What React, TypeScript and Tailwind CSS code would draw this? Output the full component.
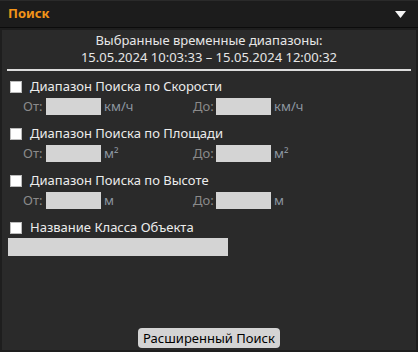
import React from "react";

const font = { fontFamily: "'Noto Sans', 'DejaVu Sans', sans-serif" };

const Check = ({ label }: { label: string }) => (
  <label className="flex items-center h-[20px] pl-[8px] gap-[8px] text-[13px] text-[#ececec]">
    <span className="w-[12px] h-[12px] bg-white border border-[#bbb] shrink-0" />
    <span>{label}</span>
  </label>
);

const RangeRow = ({ unit }: { unit: string }) => (
  <div className="flex items-center h-[19px] pl-[21px] text-[13px]">
    <span className="text-[#8a8a8a] w-[23px]">От:</span>
    <div className="w-[55px] h-[17px] bg-[#d4d4d4]" />
    <span className="text-[#8c96a0] ml-[3px] w-[89px]">{unit}</span>
    <span className="text-[#8a8a8a] w-[23px]">До:</span>
    <div className="w-[55px] h-[17px] bg-[#d4d4d4]" />
    <span className="text-[#8c96a0] ml-[3px]">{unit}</span>
  </div>
);

export default function App() {
  return (
    <div className="w-[418px] h-[352px] bg-[#1e1e1e] flex flex-col" style={font}>
      <div className="h-[28px] border-t border-[#2a2a2a] border-b border-b-[#0c0c0c] bg-[#1c1c1c] flex items-center justify-between pl-[8px] pr-[12px]">
        <span className="text-[13px] font-bold text-[#f39419]">Поиск</span>
        <svg width="11" height="7" viewBox="0 0 11 7">
          <polygon points="0,0 11,0 5.5,7" fill="#f4f4f4" />
        </svg>
      </div>
      <div className="flex-1 mx-[2px] mb-[2px] mt-[2px] bg-[#2a2a2a] flex flex-col">
        <div className="pt-[2px] text-center text-[13px] text-[#e6e6e6] leading-[17px]">
          <div>Выбранные временные диапазоны:</div>
          <div>15.05.2024 10:03:33 – 15.05.2024 12:00:32</div>
        </div>
        <div className="mx-[5px] mt-[3px] h-[2px] bg-[#dcdcdc]" />
        <div className="mt-[6px] flex flex-col">
          <Check label="Диапазон Поиска по Скорости" />
          <RangeRow unit="км/ч" />
          <div className="h-[8px]" />
          <Check label="Диапазон Поиска по Площади" />
          <RangeRow unit="м²" />
          <div className="h-[8px]" />
          <Check label="Диапазон Поиска по Высоте" />
          <RangeRow unit="м" />
          <div className="h-[8px]" />
          <Check label="Название Класса Объекта" />
          <div className="ml-[6px] w-[220px] h-[18px] bg-[#d4d4d4]" />
        </div>
        <div className="flex-1" />
        <div className="flex justify-center pb-[2px]">
          <button className="h-[20px] px-[5px] rounded-[4px] bg-[#d4d4d4] text-[13px] text-black leading-none">
            Расширенный Поиск
          </button>
        </div>
      </div>
    </div>
  );
}
